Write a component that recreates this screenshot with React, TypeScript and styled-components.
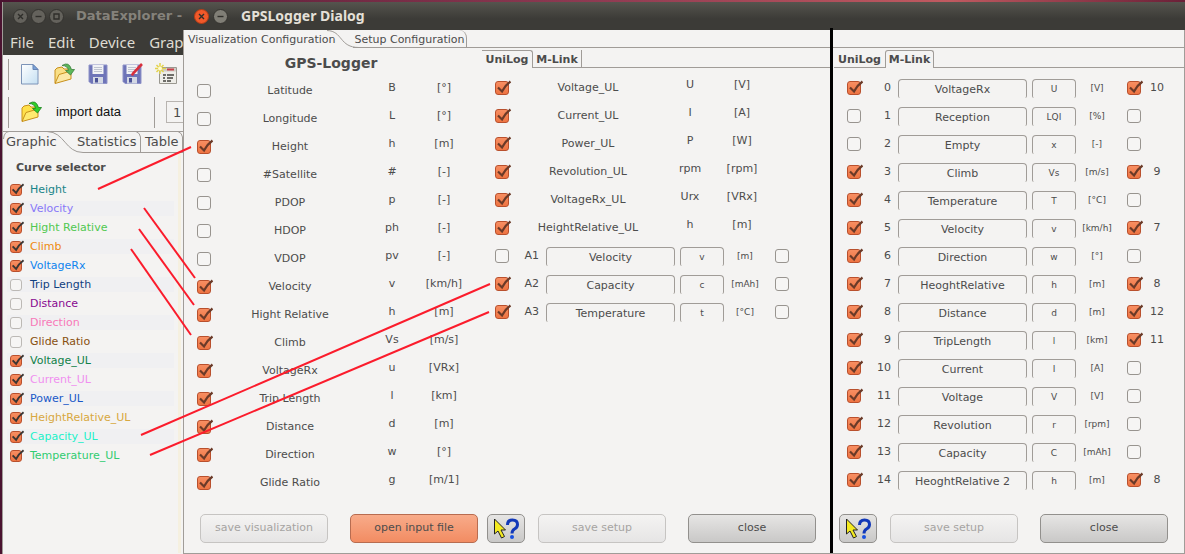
import React, { useId } from 'react';
import styled, { createGlobalStyle } from 'styled-components';

const ink = '#4c4c4c';
const face = '#f4f3f2';
const line = '#a09c98';
const sans = '"DejaVu Sans", sans-serif';
const chromeFont = '"Noto Sans", "Open Sans", sans-serif';

const GlobalStyle = createGlobalStyle`
  * { box-sizing: border-box; }
  body { margin: 0; background: ${face}; font: 11px/14px ${sans}; color: ${ink}; }
  button, input { font: inherit; color: inherit; }
`;

const Desktop = styled.div`
  position: relative;
  display: flex;
  min-height: 100vh;
  padding: 2px 0 0 2px;
  background: linear-gradient(90deg, #4a1330, #8f3a52 50%, #c05a60 80%, #6b2038);
  overflow: hidden;
`;

/* ---------- window chrome ---------- */

const TitleBar = styled.header<{ $active?: boolean }>`
  display: flex;
  align-items: center;
  height: 28px;
  padding: 0 ${p => (p.$active ? 11 : 10)}px;
  gap: ${p => (p.$active ? 4 : 3)}px;
  white-space: nowrap;
  background: linear-gradient(#55544e, #3c3b37 60%);
  color: ${p => (p.$active ? '#e4e0d8' : '#85827b')};
`;

const Title = styled.h1`
  margin: 0 0 0 9px;
  font: bold 14px/20px ${chromeFont};
`;

const MainTitle = styled(Title)`
  font: bold 13px/20px ${sans};
`;

const ChromeButton = styled.button`
  flex: none;
  width: 15px;
  height: 15px;
  padding: 0;
  border: 0;
  background: none;
  svg { display: block; }
`;

type ChromeKind = 'close' | 'min' | 'max';
const chromePaths: Record<ChromeKind, string> = {
  close: 'M5 5l5 5M10 5l-5 5',
  min: 'M4.500 7.500h6',
  max: 'M5 5h5v5h-5z',
};

function WindowButton({ kind, hot, dim }: { kind: ChromeKind; hot?: boolean; dim?: boolean }) {
  return (
    <ChromeButton aria-label={kind}>
      <svg width="15" height="15" viewBox="0 0 15 15">
        <circle cx="7.5" cy="7.5" r="7" fill={hot ? '#f0592a' : dim ? '#64625c' : '#807e76'} stroke={hot ? '#b53c16' : '#34332f'} />
        <path d={chromePaths[kind]} fill="none" stroke="#2f2e2a" strokeWidth="1.4" />
      </svg>
    </ChromeButton>
  );
}

/* ---------- tick box ---------- */

const TickWrap = styled.span<{ $size: number }>`
  position: relative;
  flex: none;
  width: ${p => p.$size}px;
  height: ${p => p.$size}px;
  svg {
    position: absolute;
    left: 0;
    top: -2px;
    pointer-events: none;
    display: none;
    overflow: visible;
  }
  input:checked + svg { display: block; }
`;

const TickInput = styled.input<{ $faint?: boolean }>`
  appearance: none;
  display: block;
  width: 100%;
  height: 100%;
  margin: 0;
  border: 1px solid ${p => (p.$faint ? '#bcb9b5' : '#98948f')};
  border-radius: 3px;
  background: #f6f5f4;
  &:checked {
    border-color: #b9502d;
    background: linear-gradient(#f78e62, #ee7442);
  }
`;

interface TickProps {
  id?: string;
  on?: boolean;
  size?: number;
  label?: string;
  dark?: boolean;
}

function Tick({ id, on, size = 14, label, dark }: TickProps) {
  return (
    <TickWrap $size={size}>
      <TickInput id={id} type="checkbox" defaultChecked={on} aria-label={label} $faint={size < 14} />
      <svg width={size + 2} height={size + 2} viewBox="0 0 16 16">
        <path d="M3 8.500L7 12.500Q10 6.500 15.500 2.500" fill="none" stroke={dark ? '#3b3633' : '#6b3a28'} strokeWidth="2.200" />
      </svg>
    </TickWrap>
  );
}

/* ---------- main window ---------- */

const MainWindow = styled.section`
  flex: none;
  width: 181px;
  overflow: hidden;
  border-left: 1px solid ${line};
  background: ${face};
  white-space: nowrap;
`;

const MenuBar = styled.nav`
  display: flex;
  gap: 14px;
  height: 25px;
  padding-left: 7px;
  background: #3c3b37;
`;

const MenuLink = styled.a`
  color: #dfdbd2;
  text-decoration: none;
  font: 15px/25px ${chromeFont};
`;

const ToolBar = styled.div`
  display: flex;
  align-items: center;
  height: 38px;
  padding-left: 5px;
`;

const Grip = styled.span`
  flex: none;
  width: 1px;
  height: 31px;
  background: ${line};
`;

const ToolGroup = styled.div`
  display: flex;
  gap: 12px;
  padding-left: 10px;
`;

const ToolButton = styled.button`
  display: flex;
  flex: none;
  padding: 0;
  border: 0;
  background: none;
`;

const ImportButton = styled(ToolButton)`
  align-items: center;
  gap: 14px;
  width: 145px;
  padding-left: 11px;
  color: #111;
  font: 13px/16px "Liberation Sans", sans-serif;
`;

const ChannelBox = styled.input`
  flex: none;
  width: 40px;
  height: 22px;
  margin-left: 11px;
  padding: 0 0 0 6px;
  border: 1px solid #b8b4b0;
  background: ${face};
  font-size: 13px;
`;

const MainTabs = styled.div`
  position: relative;
  display: flex;
  height: 22px;
  > svg { position: absolute; left: 0; top: 0; }
`;

const MainTab = styled.button<{ $width: number }>`
  position: relative;
  z-index: 1;
  flex: none;
  width: ${p => p.$width}px;
  padding: 0 0 0 3px;
  border: 0;
  background: none;
  text-align: left;
  font-size: 13px;
  line-height: 22px;
`;

const SelectorBody = styled.div`
  margin-right: 2px;
  border-right: 3px solid #f5f0e0;
  padding: 7px 4px 0 4px;
  min-height: 400px;
`;

const SelectorHeading = styled.h2`
  margin: 0 0 5px 9px;
  font-size: 11px;
  line-height: 15px;
`;

const CurveRow = styled.label<{ $color: string }>`
  display: flex;
  align-items: center;
  gap: 8px;
  height: 19px;
  padding-left: 3px;
  color: ${p => p.$color};
  &:nth-of-type(even) { background: linear-gradient(transparent 2px, #f0f0f2 2px, #f0f0f2 17px, transparent 17px); }
`;

const curves: [string, string, boolean][] = [
  ['Height', '#188488', true],
  ['Velocity', '#8878f8', true],
  ['Hight Relative', '#50c850', true],
  ['Climb', '#ee8a10', true],
  ['VoltageRx', '#1084ee', true],
  ['Trip Length', '#104080', false],
  ['Distance', '#880890', false],
  ['Direction', '#f878b8', false],
  ['Glide Ratio', '#885010', false],
  ['Voltage_UL', '#108048', true],
  ['Current_UL', '#f090f0', true],
  ['Power_UL', '#1858c8', true],
  ['HeightRelative_UL', '#d8a840', true],
  ['Capacity_UL', '#20f0c8', true],
  ['Temperature_UL', '#30cc70', true],
];

function NewIcon() {
  return (
    <svg width="22" height="22" viewBox="0 0 22 22">
      <defs>
        <linearGradient id="paper" x1="0" y1="0" x2="1" y2="1">
          <stop offset="0" stopColor="#fff" /><stop offset="1" stopColor="#c4dff2" />
        </linearGradient>
      </defs>
      <path d="M2.500 1.500H14l5 5v14.500H2.500z" fill="url(#paper)" stroke="#7d94b8" />
      <path d="M14 1.500v5h5z" fill="#7ba3d8" stroke="#6783b4" />
    </svg>
  );
}

function OpenIcon({ vivid }: { vivid?: boolean }) {
  const body = vivid ? '#ffe04a' : '#f9df86';
  return (
    <svg width="22" height="22" viewBox="0 0 22 22">
      <path d="M2 20V7l2-2 5-1 2 2 6 0v5z" fill={body} stroke="#c8901c" />
      <path d="M2 20.500L6 11.500l12-3.500v8z" fill={vivid ? '#ffea70' : '#fbe8a6'} stroke="#c8901c" />
      <path d="M9 2.500Q16-2 18.500 6.500H21.500L17.500 12L12.500 7.500H15.500Q14.500 2.500 9 2.500z" fill={vivid ? '#2fd02a' : '#5cb85a'} stroke={vivid ? '#16801a' : '#3b7f3e'} strokeWidth=".8" />
    </svg>
  );
}

function SaveIcon({ pencil }: { pencil?: boolean }) {
  return (
    <svg width="22" height="22" viewBox="0 0 22 22">
      <path d="M2 2h18v18.500H4l-2-2z" fill="#6e74b8" stroke="#8f93c8" />
      <path d="M5.500 2h11v9h-11z" fill="#f1f2f5" />
      <path d="M7 4.500h8M7 6.500h8M7 8.500h8" stroke="#bfc4d0" />
      <path d="M6 14h10v6.500H6z" fill="#d3d8e4" />
      <path d="M8 15h3v4.500H8z" fill="#4b5296" />
      {pencil && <path d="M21 1L12 10.500l-1 2" fill="none" stroke="#d8303c" strokeWidth="2.600" />}
    </svg>
  );
}

function SettingsIcon() {
  return (
    <svg width="24" height="22" viewBox="0 0 24 22">
      <path d="M4.500 4.500h17v16h-17z" fill="#eeede8" stroke="#9a9890" />
      <path d="M5 5h16v3.500H5z" fill="#cfcdc6" />
      <path d="M12 6.500h7" stroke="#c8404a" strokeWidth="2" />
      <path d="M8 12h3M12 12h7M8 15h2M12 15h6M8 18h3M12 18h4" stroke="#45443f" strokeWidth="1.300" />
      <path d="M5 0v11M0 5.500h11M1.500 2l7 7M8.500 2l-7 7" stroke="#e4d34a" strokeWidth="1.500" />
      <circle cx="5" cy="5.500" r="2" fill="#fffbd0" />
    </svg>
  );
}

function DataExplorer() {
  return (
    <MainWindow>
      <TitleBar>
        <WindowButton kind="close" dim />
        <WindowButton kind="min" dim />
        <WindowButton kind="max" dim />
        <MainTitle>DataExplorer -</MainTitle>
      </TitleBar>
      <MenuBar>
        {['File', 'Edit', 'Device', 'Graphic'].map(m => <MenuLink key={m} href="#">{m}</MenuLink>)}
      </MenuBar>
      <ToolBar>
        <Grip />
        <ToolGroup>
          <ToolButton aria-label="New"><NewIcon /></ToolButton>
          <ToolButton aria-label="Open"><OpenIcon /></ToolButton>
          <ToolButton aria-label="Save"><SaveIcon /></ToolButton>
          <ToolButton aria-label="Save as"><SaveIcon pencil /></ToolButton>
          <ToolButton aria-label="Settings"><SettingsIcon /></ToolButton>
        </ToolGroup>
      </ToolBar>
      <ToolBar>
        <Grip />
        <ImportButton><OpenIcon vivid />import data</ImportButton>
        <Grip />
        <ChannelBox aria-label="Channel" defaultValue="1" />
      </ToolBar>
      <MainTabs role="tablist">
        <svg width="180" height="22" fill="none" stroke={line}>
          <path d="M0 .5H180M.5 8Q1 1 6 .5M44 .5C62 1 62 21.500 80 21.500H180M137.500 21V6Q137 2 133 .5M179.500 21V6Q179 2 175 .5" />
        </svg>
        <MainTab role="tab" $width={71}>Graphic</MainTab>
        <MainTab role="tab" $width={68}>Statistics</MainTab>
        <MainTab role="tab" $width={41}>Table</MainTab>
      </MainTabs>
      <SelectorBody>
        <SelectorHeading>Curve selector</SelectorHeading>
        {curves.map(([name, color, on]) => (
          <CurveRow key={name} $color={color}><Tick on={on} size={12} dark />{name}</CurveRow>
        ))}
      </SelectorBody>
    </MainWindow>
  );
}

/* ---------- dialog ---------- */

const Dialog = styled.section`
  flex: 1;
  display: flex;
  flex-direction: column;
  background: ${face};
`;

const DialogBody = styled.div`
  flex: 1;
  display: flex;
  flex-direction: column;
  border: 1px solid ${line};
  border-top: 0;
`;

const DialogTabs = styled.div`
  display: flex;
  height: 18px;
`;

const DialogTab = styled.button`
  flex: none;
  padding: 1px 0 0 4px;
  border: 0;
  background: none;
  white-space: nowrap;
  line-height: 17px;
`;

const FirstTab = styled(DialogTab)`
  position: relative;
  width: 169px;
  text-align: left;
  svg { position: absolute; right: -6px; top: 0; }
`;

const SecondTab = styled(DialogTab)`
  width: 114px;
  padding: 1px 0 0;
  border-right: 1px solid ${line};
  border-bottom: 1px solid ${line};
  border-top-right-radius: 8px;
`;

const TabRule = styled.span`
  flex: 1;
  border-bottom: 1px solid ${line};
`;

const Panels = styled.div`
  flex: 1;
  display: grid;
  grid-template-columns: minmax(298px, 298fr) minmax(348px, 348fr) 4px minmax(350px, 350fr);
`;

const Divider = styled.span`
  z-index: 1;
  margin: -20px 1px 0 0;
  background: #000;
`;

const Panel = styled.section`
  display: flex;
  flex-direction: column;
  min-width: 0;
`;

const PanelHeading = styled.h2`
  margin: 0;
  width: 294px;
  height: 29px;
  text-align: center;
  font-size: 14px;
  line-height: 30px;
`;

const PanelTabs = styled.div`
  display: flex;
  height: 18px;
  margin: 2px 0 6px;
`;

const PanelTab = styled.button<{ $on: boolean; $first: boolean }>`
  flex: none;
  width: ${p => (p.$first ? 51 : 49)}px;
  padding: ${p => (p.$on ? 0 : 2)}px 0 0;
  border: solid ${line};
  border-width: ${p => (p.$on ? '1px 1px 0 0' : '0 0 1px 0')};
  border-left-width: ${p => (p.$on && !p.$first ? 1 : 0)}px;
  border-right-width: ${p => (p.$on || !p.$first ? 1 : 0)}px;
  border-radius: ${p => (p.$on ? (p.$first ? '0 3px 0 0' : '3px 3px 0 0') : '0')};
  background: none;
  font-weight: bold;
  line-height: 15px;
`;

const Row = styled.div`
  display: flex;
  height: 28px;
  padding: 7px 0 0 13px;
  white-space: nowrap;
`;

const Cell = styled.span<{ $width: number }>`
  flex: none;
  width: ${p => p.$width}px;
  line-height: 14px;
  text-align: center;
`;

const RaisedCell = styled(Cell)`
  margin-top: -3px;
`;

const NameLabel = styled.label`
  flex: none;
  width: 158px;
  text-align: center;
`;

const SlotLabel = styled.label`
  flex: none;
  width: 30px;
  margin-right: 7px;
  text-align: right;
`;

const UnitCell = styled(Cell)`
  margin-right: 9px;
  font-size: 9px;
`;

const Field = styled.input<{ $short?: boolean }>`
  flex: none;
  width: ${p => (p.$short ? 44 : 129)}px;
  height: 19px;
  margin: -2px ${p => (p.$short ? 0 : 5)}px 0 0;
  padding: 0;
  border: 1px solid ${line};
  border-bottom: 0;
  border-radius: 4px 4px 2px 2px;
  background: ${face};
  text-align: center;
  font-size: ${p => (p.$short ? 9 : 11)}px;
`;

const Footer = styled.footer`
  display: flex;
  gap: 22px;
  margin-top: auto;
  padding: 0 0 10px 16px;
`;

const PanelFooter = styled(Footer)`
  padding-left: 5px;
`;

const Push = styled.button<{ $hot?: boolean }>`
  flex: none;
  width: 128px;
  height: 29px;
  padding: 0 0 2px;
  border: 1px solid ${p => (p.$hot ? '#b86c50' : '#92908d')};
  border-radius: 5px;
  background: ${p => (p.$hot ? 'linear-gradient(#f8ab8a, #f28c62)' : 'linear-gradient(#e6e5e4, #c9c8c7)')};
  &:disabled {
    border-color: #c6c4c2;
    background: linear-gradient(#f4f3f2, #e6e5e5);
    color: #a6a4a2;
  }
`;

const HelpPush = styled(Push)`
  display: flex;
  align-items: center;
  justify-content: center;
  width: 38px;
  margin-right: -9px;
  padding: 0;
`;

function HelpButton() {
  return (
    <HelpPush aria-label="Help">
      <svg width="28" height="24" viewBox="0 0 28 24">
        <path d="M2.500 2v15l3.500-3 3.500 7 3-1.500-3.500-6.500h4.500z" fill="#f4ea20" stroke="#222" />
        <path d="M15.500 8q0-5 5-5t5 4.500q0 3-3 4.500-2.500 1.500-2.500 4.500" fill="none" stroke="#1238b8" strokeWidth="3" />
        <circle cx="20" cy="20" r="2" fill="#1850e0" />
      </svg>
    </HelpPush>
  );
}

type ReadoutData = [string, string, string, boolean];

function Readout({ data: [name, symbol, unit, on] }: { data: ReadoutData }) {
  const id = useId();
  return (
    <Row>
      <Tick id={id} on={on} />
      <NameLabel htmlFor={id}>{name}</NameLabel>
      <RaisedCell $width={46}>{symbol}</RaisedCell>
      <RaisedCell $width={58}>{unit}</RaisedCell>
    </Row>
  );
}

type SlotData = [string, string, string, string, boolean, string?];

function Slot({ data: [num, name, symbol, unit, on, target] }: { data: SlotData }) {
  const id = useId();
  return (
    <Row>
      <Tick id={id} on={on} />
      <SlotLabel htmlFor={id}>{num}</SlotLabel>
      <Field aria-label={`${num} name`} defaultValue={name} />
      <Field $short aria-label={`${num} symbol`} defaultValue={symbol} />
      <UnitCell $width={42}>{unit}</UnitCell>
      <Tick on={!!target} label={`${num} linked`} />
      <Cell $width={32}>{target}</Cell>
    </Row>
  );
}

const gps: ReadoutData[] = [
  ['Latitude', 'B', '[°]', false],
  ['Longitude', 'L', '[°]', false],
  ['Height', 'h', '[m]', true],
  ['#Satellite', '#', '[-]', false],
  ['PDOP', 'p', '[-]', false],
  ['HDOP', 'ph', '[-]', false],
  ['VDOP', 'pv', '[-]', false],
  ['Velocity', 'v', '[km/h]', true],
  ['Hight Relative', 'h', '[m]', true],
  ['Climb', 'Vs', '[m/s]', true],
  ['VoltageRx', 'u', '[VRx]', true],
  ['Trip Length', 'l', '[km]', true],
  ['Distance', 'd', '[m]', true],
  ['Direction', 'w', '[°]', true],
  ['Glide Ratio', 'g', '[m/1]', true],
];

const uniLog: ReadoutData[] = [
  ['Voltage_UL', 'U', '[V]', true],
  ['Current_UL', 'I', '[A]', true],
  ['Power_UL', 'P', '[W]', true],
  ['Revolution_UL', 'rpm', '[rpm]', true],
  ['VoltageRx_UL', 'Urx', '[VRx]', true],
  ['HeightRelative_UL', 'h', '[m]', true],
];

const analog: SlotData[] = [
  ['A1', 'Velocity', 'v', '[m]', false],
  ['A2', 'Capacity', 'c', '[mAh]', true],
  ['A3', 'Temperature', 't', '[°C]', true],
];

const mLink: SlotData[] = [
  ['0', 'VoltageRx', 'U', '[V]', true, '10'],
  ['1', 'Reception', 'LQI', '[%]', false],
  ['2', 'Empty', 'x', '[-]', false],
  ['3', 'Climb', 'Vs', '[m/s]', true, '9'],
  ['4', 'Temperature', 'T', '[°C]', true],
  ['5', 'Velocity', 'v', '[km/h]', true, '7'],
  ['6', 'Direction', 'w', '[°]', true],
  ['7', 'HeoghtRelative', 'h', '[m]', true, '8'],
  ['8', 'Distance', 'd', '[m]', true, '12'],
  ['9', 'TripLength', 'l', '[km]', true, '11'],
  ['10', 'Current', 'I', '[A]', true],
  ['11', 'Voltage', 'V', '[V]', true],
  ['12', 'Revolution', 'r', '[rpm]', true],
  ['13', 'Capacity', 'C', '[mAh]', true],
  ['14', 'HeoghtRelative 2', 'h', '[m]', true, '8'],
];

function SensorPanel({ active, children }: { active: 'UniLog' | 'M-Link'; children: React.ReactNode }) {
  return (
    <Panel>
      <PanelTabs role="tablist">
        <PanelTab role="tab" $first $on={active === 'UniLog'}>UniLog</PanelTab>
        <PanelTab role="tab" $first={false} $on={active === 'M-Link'}>M-Link</PanelTab>
        <TabRule />
      </PanelTabs>
      {children}
      <PanelFooter>
        <HelpButton />
        <Push disabled>save setup</Push>
        <Push>close</Push>
      </PanelFooter>
    </Panel>
  );
}

/* ---------- arrows between curves and dialog entries ---------- */

const Links = styled.svg`
  position: absolute;
  left: 0;
  top: 0;
  pointer-events: none;
`;

const links = [
  [98, 189, 191, 147],
  [144, 208, 195, 278],
  [139, 229, 194, 305],
  [131, 249, 191, 335],
  [141, 435, 490, 284],
  [150, 455, 489, 312],
];

export default function App() {
  return (
    <Desktop>
      <GlobalStyle />
      <DataExplorer />
      <Dialog>
        <TitleBar $active>
          <WindowButton kind="close" hot />
          <WindowButton kind="min" />
          <Title>GPSLogger Dialog</Title>
        </TitleBar>
        <DialogBody>
          <DialogTabs role="tablist">
            <FirstTab role="tab">
              Visualization Configuration
              <svg width="32" height="18" fill="none" stroke={line}>
                <path d="M0 .5C16 1 12 17.500 32 17.500" />
              </svg>
            </FirstTab>
            <SecondTab role="tab">Setup Configuration</SecondTab>
            <TabRule />
          </DialogTabs>
          <Panels>
            <Panel>
              <PanelHeading>GPS-Logger</PanelHeading>
              {gps.map(d => <Readout key={d[0]} data={d} />)}
              <Footer>
                <Push disabled>save visualization</Push>
                <Push $hot>open input file</Push>
              </Footer>
            </Panel>
            <SensorPanel active="UniLog">
              {uniLog.map(d => <Readout key={d[0]} data={d} />)}
              {analog.map(d => <Slot key={d[0]} data={d} />)}
            </SensorPanel>
            <Divider />
            <SensorPanel active="M-Link">
              {mLink.map(d => <Slot key={d[0]} data={d} />)}
            </SensorPanel>
          </Panels>
        </DialogBody>
      </Dialog>
      <Links width="500" height="480" stroke="#fb1c2c" strokeWidth="2">
        {links.map(([x1, y1, x2, y2]) => <line key={y1} x1={x1} y1={y1} x2={x2} y2={y2} />)}
      </Links>
    </Desktop>
  );
}
